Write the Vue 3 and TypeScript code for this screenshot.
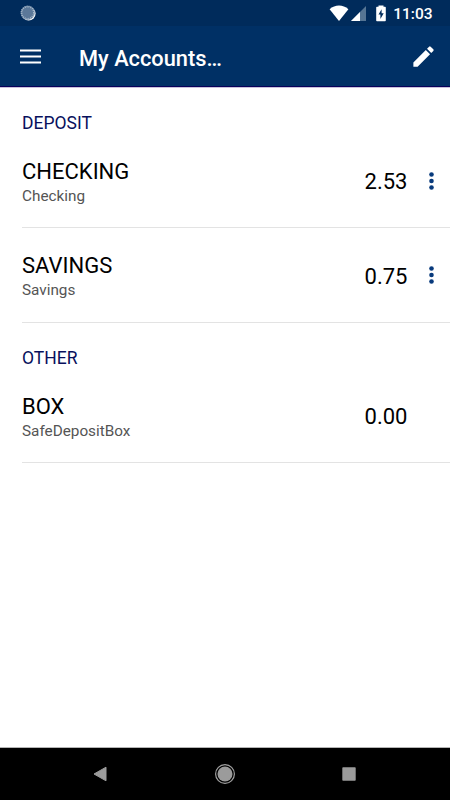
<script setup lang="ts">
interface Account {
  name: string
  kind: string
  balance: string
  hasMenu: boolean
}

interface Section {
  title: string
  accounts: Account[]
}

const sections: Section[] = [
  {
    title: 'DEPOSIT',
    accounts: [
      { name: 'CHECKING', kind: 'Checking', balance: '2.53', hasMenu: true },
      { name: 'SAVINGS', kind: 'Savings', balance: '0.75', hasMenu: true },
    ],
  },
  {
    title: 'OTHER',
    accounts: [{ name: 'BOX', kind: 'SafeDepositBox', balance: '0.00', hasMenu: false }],
  },
]
</script>

<template>
  <div class="screen">
    <div class="status">
      <svg class="sync" width="18" height="18" viewBox="0 0 18 18">
        <circle cx="8.6" cy="8.6" r="7" fill="#ffffff" />
        <circle cx="7.7" cy="7.7" r="7" fill="#5b7899" />
        <circle cx="7.7" cy="7.7" r="6.2" fill="none" stroke="#a9bacb" stroke-width="1.8" stroke-dasharray="1 0.95" />
      </svg>
      <div class="indicators">
        <svg class="wifi" width="20" height="17" viewBox="0 0 20 17">
          <path d="M0.6 4.2C6-0.6 14-0.6 19.4 4.2L10 16z" fill="#fff" />
        </svg>
        <svg class="signal" width="16" height="16" viewBox="0 0 16 16">
          <path d="M0 15L15 0v15z" fill="#557594" />
          <path d="M0 15L9 6v9z" fill="#fff" />
        </svg>
        <svg class="battery" width="10" height="17" viewBox="0 0 10 17">
          <path d="M2.500 1.800V.4h5v1.400H9a.8.8 0 0 1 .8.8v12.900a.8.8 0 0 1-.8.8H1a.8.8 0 0 1-.8-.8V2.600a.8.8 0 0 1 .8-.8z" fill="#fff" />
          <path d="M5.600 4.200L2.500 9.600h1.900v4.300l3.300-5.600H5.600z" fill="#002b5b" />
        </svg>
        <span class="clock">11:03</span>
      </div>
    </div>

    <header class="toolbar">
      <svg class="menu" width="21" height="16" viewBox="0 0 21 16">
        <path d="M0 1.500h21M0 7.500h21M0 13.500h21" stroke="#fff" stroke-width="2.200" />
      </svg>
      <h1 class="title">My Accounts…</h1>
      <svg class="edit" width="27" height="27" viewBox="0 0 24 24">
        <path d="M3 17.250V21h3.750L17.810 9.940l-3.750-3.750L3 17.250zM20.710 7.040a1 1 0 0 0 0-1.410l-2.340-2.340a1 1 0 0 0-1.410 0l-1.830 1.830 3.750 3.750 1.830-1.830z" fill="#fff" />
      </svg>
    </header>

    <main class="content">
      <section v-for="section in sections" :key="section.title" class="section">
        <h2 class="heading">{{ section.title }}</h2>
        <div v-for="account in section.accounts" :key="account.name" class="row">
          <div class="info">
            <div class="name">{{ account.name }}</div>
            <div class="kind">{{ account.kind }}</div>
          </div>
          <div class="balance">{{ account.balance }}</div>
          <div class="more">
            <svg v-if="account.hasMenu" width="6" height="18" viewBox="0 0 6 18">
              <g fill="#083a7c">
                <circle cx="2.500" cy="2.500" r="2.300" />
                <circle cx="2.500" cy="9" r="2.300" />
                <circle cx="2.500" cy="15.500" r="2.300" />
              </g>
            </svg>
          </div>
        </div>
      </section>
    </main>

    <nav class="navbar">
      <svg width="14" height="16" viewBox="0 0 14 16">
        <path d="M13 1.200v13.600L1 8z" fill="#9b9b9b" stroke="#9b9b9b" stroke-linejoin="round" />
      </svg>
      <svg width="22" height="22" viewBox="0 0 22 22">
        <circle cx="11" cy="11" r="9.400" fill="none" stroke="#a0a0a0" stroke-width="1.200" />
        <circle cx="11" cy="11" r="7.500" fill="#9b9b9b" />
      </svg>
      <svg width="14" height="14" viewBox="0 0 14 14">
        <rect x="0.300" y="0.300" width="13.400" height="13.400" rx="0.800" fill="#9b9b9b" />
      </svg>
    </nav>
  </div>
</template>

<style>
body {
  margin: 0;
}
</style>

<style scoped>
.screen {
  display: flex;
  flex-direction: column;
  width: 450px;
  height: 800px;
  overflow: hidden;
  background: #fff;
  font-family: Roboto, 'Liberation Sans', sans-serif;
}

svg {
  display: block;
  flex: none;
}

.status {
  display: flex;
  justify-content: space-between;
  height: 26px;
  padding: 0 17.500px 0 20px;
  background: #002b5b;
}

.sync {
  margin-top: 5px;
}

.indicators {
  display: flex;
}

.wifi {
  margin: 5px 2px 0 0;
}

.signal {
  margin: 6px 9px 0 0;
}

.battery {
  margin: 5px 7.500px 0 0;
}

.clock {
  color: #fff;
  font-size: 15.500px;
  font-weight: 500;
  line-height: 28px;
}

.toolbar {
  display: flex;
  align-items: center;
  box-sizing: border-box;
  height: 62px;
  padding: 0 13px 0 20px;
  border-bottom: 1px solid #c9c2dc;
  box-shadow: inset 0 -1px #08005a;
  background: #003065;
}

.menu {
  margin-top: 1px;
}

.title {
  flex: 1;
  margin: 4px 0 0 38px;
  color: #fff;
  font-size: 21.800px;
  font-weight: 500;
  line-height: 28px;
}

.content {
  flex: 1;
  padding-left: 22px;
}

.heading {
  height: 45px;
  margin: 0;
  padding-top: 25px;
  box-sizing: border-box;
  color: #08105c;
  font-size: 17.500px;
  font-weight: 400;
  line-height: 21px;
}

.row {
  display: flex;
  box-sizing: border-box;
  height: 95px;
  border-bottom: 1px solid #e3e3e3;
}

.info {
  flex: 1;
  padding-top: 26px;
}

.name {
  color: #000;
  font-size: 22px;
  line-height: 26px;
}

.kind {
  color: #555;
  font-size: 15.300px;
  line-height: 22px;
}

.balance {
  padding-top: 36px;
  color: #000;
  font-size: 22px;
  line-height: 26px;
}

.more {
  width: 21.500px;
  padding: 38.500px 0 0 21px;
}

.row + .row .info {
  padding-top: 25px;
}

.row + .row .more {
  padding-top: 38px;
}

.navbar {
  display: flex;
  align-items: center;
  justify-content: space-between;
  box-sizing: border-box;
  height: 53px;
  padding: 0 94px 0 93px;
  border-top: 1px solid #b4b4b4;
  background: #000;
}
</style>
